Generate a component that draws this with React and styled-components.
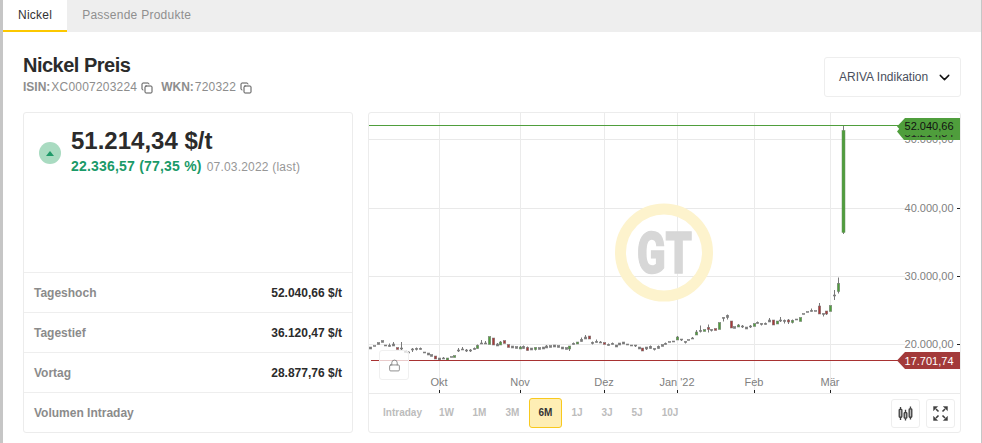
import React from "react";
import styled, { createGlobalStyle } from "styled-components";
import { ChevronDown, Copy, Lock } from "lucide-react";

const GlobalStyle = createGlobalStyle`
  html, body {
    margin: 0;
    padding: 0;
    background: #fff;
  }
  * {
    box-sizing: border-box;
  }
`;

const Page = styled.div`
  width: 982px;
  height: 443px;
  overflow: hidden;
  background: #fff;
  border-left: 3px solid #c6c6c6;
  border-right: 1px solid #c6c6c6;
  font-family: "Liberation Sans", Arial, sans-serif;
  color: #2b2b2b;
`;
const TabBar = styled.div`
  display: flex;
  height: 32px;
  background: #eeeeee;
`;
const Tab = styled.div`
  height: 32px;
  padding: 0 15px;
  line-height: 31px;
  font-size: 12px;
  letter-spacing: 0.25px;
  color: ${props => (props.active ? "#333" : "#8f8f8f")};
  background: ${props => (props.active ? "#fff" : "transparent")};
  border-bottom: 2px solid ${props => (props.active ? "#fcc800" : "transparent")};
`;
const Content = styled.div`
  padding: 0 20px;
`;
const Header = styled.div`
  display: flex;
  justify-content: space-between;
  height: 80px;
  padding-top: 21px;
`;
const Title = styled.h1`
  margin: 0;
  font-size: 20px;
  line-height: 24px;
  font-weight: 700;
  letter-spacing: -0.5px;
`;
const Codes = styled.div`
  display: flex;
  align-items: center;
  height: 14px;
  margin-top: 3px;
  font-size: 12px;
  letter-spacing: 0.2px;
  color: #8d8d8d;
  b {
    font-weight: 700;
    letter-spacing: 0;
    margin-right: 1px;
  }
`;
const CopyIcon = styled(Copy)`
  margin: 1px 8px 0 4px;
  color: #555;
`;
const Select = styled.div`
  display: flex;
  align-items: center;
  justify-content: space-between;
  width: 137px;
  height: 40px;
  margin-top: 4px;
  padding: 0 7px 0 14px;
  border: 1px solid #eeeeee;
  border-radius: 3px;
  font-size: 12px;
  color: #4a4f5c;
`;
const Columns = styled.div`
  display: grid;
  grid-template-columns: 330px 593px;
  column-gap: 15px;
`;
const Card = styled.div`
  height: 321px;
  border: 1px solid #ececec;
  border-radius: 3px;
  display: flex;
  flex-direction: column;
`;
const Quote = styled.div`
  display: flex;
  align-items: flex-start;
  height: 159px;
  padding: 14px 0 0 15px;
`;
const Bubble = styled.div`
  display: flex;
  align-items: center;
  justify-content: center;
  width: 22px;
  height: 22px;
  margin: 15px 10px 0 0;
  border-radius: 50%;
  background: #a9dbc1;
`;
const Caret = styled.div`
  width: 0;
  height: 0;
  border-left: 4px solid transparent;
  border-right: 4px solid transparent;
  border-bottom: 5px solid #1f9a69;
`;
const Price = styled.div`
  font-size: 24px;
  line-height: 28px;
  font-weight: 700;
`;
const ChangeRow = styled.div`
  display: flex;
  align-items: baseline;
  margin-top: 3px;
`;
const Change = styled.span`
  font-size: 14px;
  font-weight: 700;
  letter-spacing: 0.2px;
  color: #1a9a68;
  margin-right: 5px;
`;
const DateText = styled.span`
  font-size: 12px;
  letter-spacing: 0.2px;
  color: #979797;
`;
const StatRow = styled.div`
  display: flex;
  justify-content: space-between;
  align-items: center;
  height: 40px;
  padding: 0 10px;
  border-top: 1px solid #eeeeee;
  font-size: 12px;
  font-weight: 700;
`;
const StatLabel = styled.span`
  color: #8b8b8b;
`;
const StatValue = styled.span`
  color: #2b2b2b;
`;
const ChartWrap = styled.div`
  position: relative;
  height: 280px;
`;
const ChartSvg = styled.svg`
  display: block;
  width: 591px;
  height: 280px;
`;
const AxisText = styled.text`
  font-family: "Liberation Sans", Arial, sans-serif;
  font-size: 11px;
  fill: ${props => props.color || "#808080"};
  text-anchor: ${props => props.anchor || "start"};
`;
const LogoText = styled.text`
  font-family: Roboto, "Liberation Sans", sans-serif;
  font-size: 57px;
  font-weight: 900;
  fill: #d7d7d7;
  stroke: #d7d7d7;
  stroke-width: 1.5px;
`;
const LockButton = styled.div`
  position: absolute;
  left: 10px;
  top: 237px;
  display: flex;
  align-items: center;
  justify-content: center;
  width: 30px;
  height: 30px;
  background: rgba(255, 255, 255, 0.75);
  border: 1px solid #f0f0f0;
  border-radius: 3px;
  color: #777;
`;
const Toolbar = styled.div`
  display: flex;
  align-items: center;
  height: 39px;
  padding: 0 5px 0 6px;
  border-top: 1px solid #eaeaea;
`;
const Range = styled.div`
  width: ${props => props.size}px;
  height: 30px;
  line-height: 28px;
  font-size: 10px;
  font-weight: 700;
  text-align: center;
  border: 1px solid ${props => (props.active ? "#f8c91e" : "transparent")};
  border-radius: 3px;
  color: ${props => (props.active ? "#333" : "#bcbcbc")};
  background: ${props => (props.active ? "#feeeb4" : "transparent")};
`;
const ToolRight = styled.div`
  display: flex;
  gap: 6px;
  margin-left: auto;
`;
const IconButton = styled.div`
  display: flex;
  align-items: center;
  justify-content: center;
  width: 29px;
  height: 29px;
  border: 1px solid #eeeeee;
  border-radius: 3px;
  color: #3f3f3f;
`;

const G = "#4f9e3c";
const R = "#a83a3a";

// top of body, body height, wick up, wick down, fill
const candles = [
  [347, 2], [345.5, 1], [342.5, 2], [340.5, 2], [345, 1], [345.5, 1, 2], [344, 2, 2], [347.5, 2, 0, 0, R],
  [348, 1, 6, 1], [350.5, 2], [352, 1, 1, 3], [349, 1, 1, 2], [348.5, 1, 1, 1], [348.5, 1, 1], [352, 1], [353, 2],
  [354.5, 2], [356, 3, 0, 0, R], [358, 2], [358, 1, 1], [358, 2, 0, 0, G], [356.5, 1], [355.5, 2, 0, 0, G], [350, 1, 2, 1],
  [349, 1, 2], [350, 1, 1, 1], [350, 1, 1, 1], [348.5, 1, 1], [345.5, 3, 1, 0, G], [343, 1, 3], [343, 1, 2],
  [336.5, 8, 0, 0, G], [338, 7, 0, 0, R], [344, 2, 1], [342, 3, 1, 0, G], [340.5, 3, 0, 0, R], [344.5, 3, 0, 0, R],
  [346, 2], [346.5, 2], [347, 2, 1, 0, G], [346.5, 2, 1], [347.5, 3, 1, 0, R], [348, 2], [347.5, 2, 0, 1, G],
  [347.5, 2], [347, 2], [346, 2, 1], [345.5, 2], [345, 2], [345.5, 2], [347, 2], [347.5, 2], [346, 3, 0, 2, G],
  [343.5, 1, 1], [342, 2, 0, 0, G], [339.5, 2, 2], [337, 2, 2], [336, 3, 0, 0, R], [342.5, 1, 1, 1], [341.5, 1, 2],
  [342, 1, 1], [342.5, 2, 0, 0, R], [344.5, 1, 1], [343.5, 1, 1], [345, 2], [343, 2], [342, 2], [344, 1, 0], [345, 1],
  [345, 1, 0, 1], [347, 2], [348, 3, 0, 0, R], [347, 2, 0, 1], [346.5, 2, 1], [348.5, 1, 0, 1], [346.5, 2, 1],
  [344.5, 2], [343.5, 1, 1], [341.5, 1], [341, 1], [337, 3, 1, 0, G], [339, 1, 0, 1], [341.5, 1, 0, 1], [339.5, 1],
  [338, 1, 1], [332, 3, 2, 0, G], [330.5, 1, 5, 1], [329.5, 2, 0, 0, G], [327.5, 2, 3, 3, R], [329.5, 1, 0, 1], [328.5, 2, 0, 0, R],
  [322.5, 7, 0, 0, G], [317.5, 1, 0, 3], [315.5, 2, 1, 2], [321, 7, 0, 0, R], [326.5, 2], [325, 2, 1, 0, G], [326, 1, 1, 1],
  [327, 2], [326, 1, 1, 1], [323.5, 3, 0, 0, G], [322.5, 1, 1], [323.5, 1, 0, 1], [323.5, 1, 1], [320, 2, 2],
  [320, 5, 0, 0, R], [321, 3, 0, 0, G], [320, 1, 3, 1], [320.5, 1, 1, 2], [320, 2, 1, 2, R], [320.5, 2, 1, 1, G],
  [319, 1], [317.5, 4, 0, 0, G], [313.5, 1], [311.5, 1], [310.5, 1, 2], [310.5, 1], [306, 8, 3, 0, R], [313.5, 1, 0, 2],
  [311, 3, 0, 1, R], [305.5, 6, 0, 0, G], [295, 1, 5, 4], [283.5, 8, 6, 2, G],
];

const hLines = [139.5, 208.5, 276.5, 344.5];
const vLines = [439.5, 520.5, 604.5, 677.5, 754.5, 830.5];
const months = [
  ["Okt", 439],
  ["Nov", 520],
  ["Dez", 604],
  ["Jan '22", 677],
  ["Feb", 754],
  ["Mär", 830],
];
const yLabels = [
  ["40.000,00", 212],
  ["30.000,00", 280],
  ["20.000,00", 348],
];

const Candle = ({ x, data, wide }) => {
  const [y, h, up = 0, down = 0, fill = "#7a7a7a"] = data;
  const w = wide ? 3 : 2.5;
  return (
    <g>
      {(up > 0 || down > 0) && (
        <line x1={x} x2={x} y1={y - up} y2={y + h + down} stroke="#7a7a7a" strokeWidth="1" />
      )}
      <rect x={x - w / 2} y={y} width={w} height={h} fill={fill} stroke={wide ? "#6c8f63" : "#7a7a7a"} strokeWidth="0.5" />
    </g>
  );
};

const Chart = () => (
  <ChartSvg viewBox="369 113 591 280">
    {hLines.map(y => (
      <line key={y} x1="369" x2="905" y1={y} y2={y} stroke="#e9e9e9" />
    ))}
    {vLines.map(x => (
      <line key={x} x1={x} x2={x} y1="113" y2="393" stroke="#ebebeb" />
    ))}
    <circle cx="664" cy="252.5" r="43.5" fill="none" stroke="#fdf3cd" strokeWidth="11" />
    <LogoText x="637" y="272.5" textLength="55" lengthAdjust="spacingAndGlyphs">GT</LogoText>

    {candles.map((c, i) => (
      <Candle key={i} x={Math.round(370 + i * 3.836) + 0.5} data={c} />
    ))}
    <Candle x={843.5} data={[130.5, 102, 4.5, 1.5, G]} wide />

    {yLabels.map(([text, y]) => (
      <AxisText key={text} x="953.5" y={y} anchor="end">{text}</AxisText>
    ))}
    {[208.5, 276.5, 344.5].map(y => (
      <line key={y} x1="957" x2="960" y1={y} y2={y} stroke="#222" />
    ))}
    {months.map(([text, x]) => (
      <AxisText key={text} x={x} y="386" anchor="middle">{text}</AxisText>
    ))}
    {vLines.map(x => (
      <line key={x} x1={x} x2={x} y1="390" y2="393" stroke="#222" />
    ))}

    <AxisText x="953.5" y="143" anchor="end">50.000,00</AxisText>
    <polygon points="960,123 904,123 897,131.5 904,140 960,140" fill={G} />
    <AxisText x="953.5" y="137" anchor="end" color="#222">51.214,34</AxisText>
    <line x1="369" x2="900" y1="125.5" y2="125.5" stroke={G} />
    <polygon points="960,118 905,118 897,126.5 905,135 960,135" fill={G} />
    <AxisText x="953.5" y="130" anchor="end" color="#111">52.040,66</AxisText>

    <line x1="371" x2="900" y1="360.5" y2="360.5" stroke="#a83232" />
    <polygon points="960,352 905,352 897,360.5 905,369 960,369" fill="#a33a3a" />
    <AxisText x="953.5" y="364.5" anchor="end" color="#fff">17.701,74</AxisText>
  </ChartSvg>
);

const CandleIcon = () => (
  <svg width="15" height="15" viewBox="0 0 16 16" fill="none" stroke="currentColor" strokeWidth="1.4">
    <path d="M2.7 1v2.5M2.7 12v3M8 4v3M8 13v2.5M13.3 .5V3M13.3 12v2.5" />
    <rect x="1.3" y="3.5" width="2.8" height="8.5" rx="0.8" fill="#bbb" />
    <rect x="6.6" y="7" width="2.8" height="6" rx="0.8" fill="#bbb" />
    <rect x="11.9" y="3" width="2.8" height="9" rx="0.8" fill="#bbb" />
  </svg>
);

const ExpandIcon = () => (
  <svg width="15" height="15" viewBox="0 0 15 15" fill="currentColor" stroke="currentColor" strokeWidth="1.6">
    <path d="M5.5 5.5 3 3M9.5 5.5 12 3M5.5 9.5 3 12M9.5 9.5 12 12" fill="none" />
    <path d="M.5 .5h4.2L.5 4.7zM14.5 .5h-4.2l4.2 4.2zM.5 14.5h4.2L.5 10.3zM14.5 14.5h-4.2l4.2-4.2z" strokeWidth="0.4" />
  </svg>
);

const stats = [
  ["Tageshoch", "52.040,66 $/t"],
  ["Tagestief", "36.120,47 $/t"],
  ["Vortag", "28.877,76 $/t"],
  ["Volumen Intraday", ""],
];
const ranges = [
  ["Intraday", 55],
  ["1W", 33],
  ["1M", 33],
  ["3M", 33],
  ["6M", 33],
  ["1J", 30],
  ["3J", 30],
  ["5J", 30],
  ["10J", 36],
];

export default function App() {
  return (
    <Page>
      <GlobalStyle />
      <TabBar>
        <Tab active>Nickel</Tab>
        <Tab>Passende Produkte</Tab>
      </TabBar>
      <Content>
        <Header>
          <div>
            <Title>Nickel Preis</Title>
            <Codes>
              <b>ISIN:</b> XC0007203224
              <CopyIcon size={12} strokeWidth={2} />
              <b>WKN:</b> 720322
              <CopyIcon size={12} strokeWidth={2} />
            </Codes>
          </div>
          <Select>
            ARIVA Indikation
            <ChevronDown size={17} color="#111" strokeWidth={2} />
          </Select>
        </Header>
        <Columns>
          <Card>
            <Quote>
              <Bubble>
                <Caret />
              </Bubble>
              <div>
                <Price>51.214,34 $/t</Price>
                <ChangeRow>
                  <Change>22.336,57 (77,35 %)</Change>
                  <DateText>07.03.2022 (last)</DateText>
                </ChangeRow>
              </div>
            </Quote>
            {stats.map(([label, value]) => (
              <StatRow key={label}>
                <StatLabel>{label}</StatLabel>
                <StatValue>{value}</StatValue>
              </StatRow>
            ))}
          </Card>
          <Card>
            <ChartWrap>
              <Chart />
              <LockButton>
                <Lock size={13} strokeWidth={1.5} />
              </LockButton>
            </ChartWrap>
            <Toolbar>
              {ranges.map(([label, size]) => (
                <Range key={label} active={label === "6M"} size={size}>{label}</Range>
              ))}
              <ToolRight>
                <IconButton>
                  <CandleIcon />
                </IconButton>
                <IconButton>
                  <ExpandIcon />
                </IconButton>
              </ToolRight>
            </Toolbar>
          </Card>
        </Columns>
      </Content>
    </Page>
  );
}
